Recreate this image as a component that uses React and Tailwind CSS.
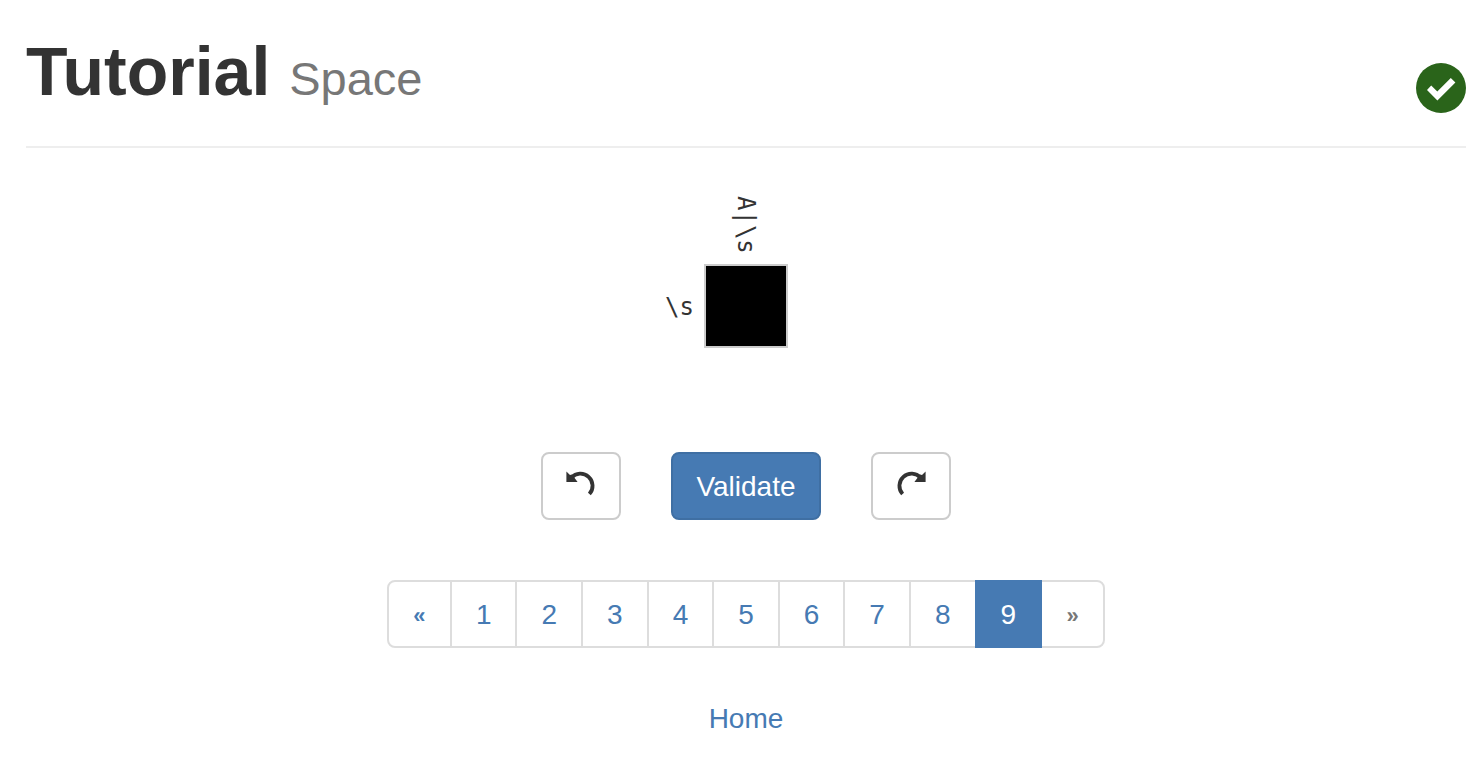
const PAGES = [1, 2, 3, 4, 5, 6, 7, 8];

function CheckBadge() {
  return (
    <svg viewBox="0 0 50 50" className="size-[50px] shrink-0" role="img" aria-label="Solved">
      <circle cx="25" cy="25" r="25" fill="#2a641a" />
      <path d="M11 27 15.2 22.4 21.3 28.6 34.8 15 39.4 19.4 21.4 37.4Z" fill="#fff" />
    </svg>
  );
}

function TurnArrow({ className = "" }) {
  return (
    <svg viewBox="0 0 30 30" className={`size-[30px] ${className}`} aria-hidden="true">
      <path d="M5.4 6.6A12.1 12.1 0 1 1 23.4 23" fill="none" stroke="#333" strokeWidth="3.8" />
      <path d="M.4 .4V11H11.6L6 3.6 4 4Z" fill="#333" />
    </svg>
  );
}

function HistoryButton({ label, flip }) {
  return (
    <button
      type="button"
      aria-label={label}
      className="flex h-[68px] w-20 items-center justify-center rounded-lg border-2 border-[#ccc] bg-white"
    >
      <TurnArrow className={flip ? "-scale-x-100" : ""} />
    </button>
  );
}

export default function App() {
  return (
    <div className="bg-white pr-3 pl-[26px] font-['Helvetica_Neue','Liberation_Sans',Arial,sans-serif] text-[28px] leading-10 text-[#333]">
      <header className="flex items-end justify-between border-b-2 border-[#eee] pt-[29px] pb-[33px]">
        <h1 className="text-[68px] leading-[84px] font-bold">
          Tutorial{" "}
          <small className="text-[47px] leading-none font-normal text-[#777]">Space</small>
        </h1>
        <CheckBadge />
      </header>

      <main className="flex flex-col items-center">
        <div className="mt-12 grid w-full grid-cols-[1fr_auto_1fr] items-center gap-x-[10px] gap-y-[10px] font-['DejaVu_Sans_Mono',monospace] text-[24px] leading-8">
          <span className="col-start-2 justify-self-center [writing-mode:vertical-rl]">A|\s</span>
          <span className="col-start-1 justify-self-end pt-[2px]">\s</span>
          <button
            type="button"
            aria-label="Cell 1"
            className="size-[84px] border-2 border-[#ccc] bg-black"
          />
        </div>

        <div className="mt-[104px] flex gap-[50px]">
          <HistoryButton label="Undo" />
          <button
            type="button"
            className="h-[68px] w-[150px] rounded-lg border-2 border-[#3f6fa3] bg-[#467ab3] pt-[2px] text-white"
          >
            Validate
          </button>
          <HistoryButton label="Redo" flip />
        </div>

        <nav aria-label="Levels" className="mt-[60px]">
          <ul className="flex text-[#467ab3]">
            <li>
              <a
                href="#8"
                aria-label="Previous"
                className="flex h-[68px] w-[65px] items-center justify-center rounded-l-lg border-2 border-[#ddd] pt-1 text-[22px] font-bold"
              >
                «
              </a>
            </li>
            {PAGES.map((page) => (
              <li key={page} className="-ml-[2px]">
                <a href={`#${page}`} className="flex h-[68px] items-center border-2 border-[#ddd] px-6 pt-[2px]">
                  {page}
                </a>
              </li>
            ))}
            <li className="relative -ml-[2px]">
              <a
                href="#9"
                aria-current="page"
                className="flex h-[68px] items-center border-2 border-[#467ab3] bg-[#467ab3] px-6 pt-[2px] text-white"
              >
                9
              </a>
            </li>
            <li className="-ml-[2px]">
              <span className="flex h-[68px] w-[65px] items-center justify-center rounded-r-lg border-2 border-[#ddd] pt-1 text-[22px] font-bold text-[#777]">
                »
              </span>
            </li>
          </ul>
        </nav>

        <a href="#home" className="mt-[50px] pt-px text-[#467ab3]">
          Home
        </a>
      </main>
    </div>
  );
}
